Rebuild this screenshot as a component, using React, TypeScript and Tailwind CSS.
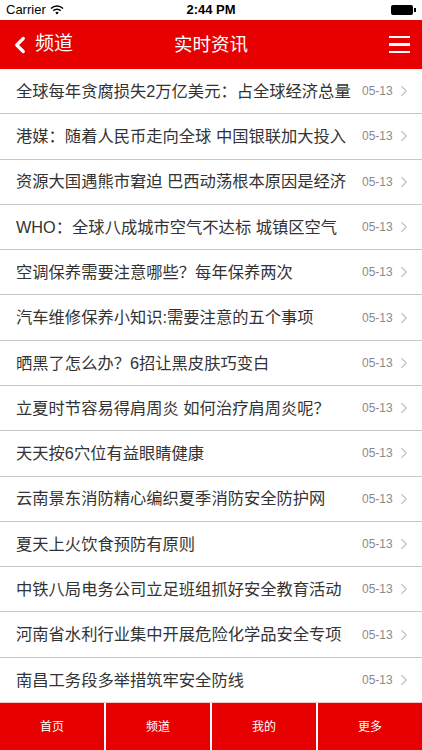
import { ChevronLeft, ChevronRight } from "lucide-react";

const news = [
  "全球每年贪腐损失2万亿美元：占全球经济总量",
  "港媒：随着人民币走向全球 中国银联加大投入",
  "资源大国遇熊市窘迫 巴西动荡根本原因是经济",
  "WHO：全球八成城市空气不达标 城镇区空气",
  "空调保养需要注意哪些？每年保养两次",
  "汽车维修保养小知识:需要注意的五个事项",
  "晒黑了怎么办？6招让黑皮肤巧变白",
  "立夏时节容易得肩周炎 如何治疗肩周炎呢？",
  "天天按6穴位有益眼睛健康",
  "云南景东消防精心编织夏季消防安全防护网",
  "夏天上火饮食预防有原则",
  "中铁八局电务公司立足班组抓好安全教育活动",
  "河南省水利行业集中开展危险化学品安全专项",
  "南昌工务段多举措筑牢安全防线",
];

const tabs = ["首页", "频道", "我的", "更多"];

const font = {
  fontFamily: '"Helvetica Neue", "Liberation Sans", "Noto Sans CJK SC", sans-serif',
};

const App = () => {
  return (
    <div
      className="w-[422px] h-[750px] flex flex-col bg-white overflow-hidden"
      style={font}
    >
      {/* Status bar */}
      <div className="h-[20px] flex items-center justify-between px-[6px] text-[13px] text-black">
        <div className="flex items-center gap-[4px] w-[100px]">
          <span>Carrier</span>
          <svg width="14" height="10" viewBox="0 0 14 10">
            <path d="M1 3.5a8.5 8.5 0 0 1 12 0" stroke="#000" strokeWidth="1.6" fill="none" />
            <path d="M3.3 5.8a5.2 5.2 0 0 1 7.4 0" stroke="#000" strokeWidth="1.6" fill="none" />
            <path d="M5.3 7.8a2.3 2.3 0 0 1 3.4 0L7 9.6z" fill="#000" />
          </svg>
        </div>
        <span className="font-semibold">2:44 PM</span>
        <div className="w-[100px] flex justify-end items-center">
          <div className="w-[22px] h-[10px] bg-black rounded-[2px]" />
          <div className="w-[2px] h-[4px] bg-black ml-[1px]" />
        </div>
      </div>

      {/* Nav bar */}
      <header className="h-[49px] bg-[#e60000] flex items-center justify-between text-white">
        <div className="flex items-center w-[100px] pl-[8px]">
          <ChevronLeft size={26} strokeWidth={3} className="-ml-[1px]" />
          <span className="text-[19px] ml-[2px]">频道</span>
        </div>
        <h1 className="text-[18.5px]">实时资讯</h1>
        <div className="w-[100px] flex justify-end pr-[12px]">
          <div className="flex flex-col gap-[5px]">
            <span className="block w-[21px] h-[2.5px] bg-white" />
            <span className="block w-[21px] h-[2.5px] bg-white" />
            <span className="block w-[21px] h-[2.5px] bg-white" />
          </div>
        </div>
      </header>

      {/* News list */}
      <ul className="flex-1 flex flex-col">
        {news.map((title, i) => (
          <li
            key={i}
            className={`flex-1 flex items-center pl-[16px] ${
              i < news.length - 1 ? "border-b border-[#c8c8c8]" : ""
            }`}
          >
            <span className="w-[337px] shrink-0 overflow-hidden whitespace-nowrap text-[16.3px] text-[#333]">
              {title}
            </span>
            <span className="ml-[9px] shrink-0 whitespace-nowrap text-[12px] text-[#8a8a8a]">
              05-13
            </span>
            <ChevronRight
              size={18}
              strokeWidth={1.6}
              className="ml-[2px] shrink-0 text-[#c2c2c8]"
            />
          </li>
        ))}
      </ul>

      {/* Tab bar */}
      <nav className="h-[48px] flex gap-[2px] bg-white border-t border-[#f3c9c9]">
        {tabs.map((t) => (
          <div
            key={t}
            className="flex-1 bg-[#e60000] flex items-center justify-center text-white text-[12px]"
          >
            {t}
          </div>
        ))}
      </nav>
    </div>
  );
};

export default App;
